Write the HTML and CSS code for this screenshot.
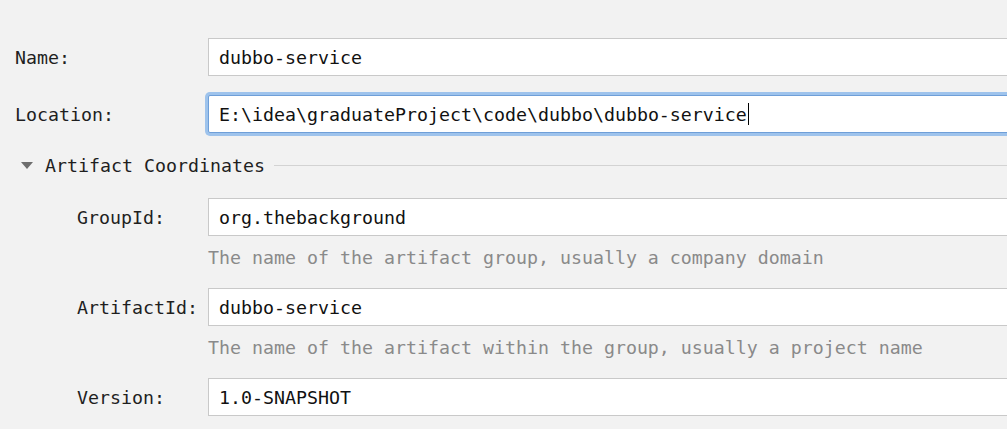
FILE: index.html
```html
<!DOCTYPE html>
<html>
<head>
<meta charset="utf-8">
<link rel="stylesheet" href="styles.css">
</head>
<body>
<div class="form">
  <div class="row">
    <div class="label">Name:</div>
    <div class="field">dubbo-service</div>
  </div>
  <div class="row row-loc">
    <div class="label">Location:</div>
    <div class="field focused">E:\idea\graduateProject\code\dubbo\dubbo-service<span class="caret"></span></div>
  </div>
  <div class="section">
    <span class="tri"></span>
    <span class="section-title">Artifact Coordinates</span>
    <span class="section-line"></span>
  </div>
  <div class="sub">
    <div class="row">
      <div class="label sublabel">GroupId:</div>
      <div class="field">org.thebackground</div>
    </div>
    <div class="hint">The name of the artifact group, usually a company domain</div>
    <div class="row">
      <div class="label sublabel">ArtifactId:</div>
      <div class="field">dubbo-service</div>
    </div>
    <div class="hint">The name of the artifact within the group, usually a project name</div>
    <div class="row">
      <div class="label sublabel">Version:</div>
      <div class="field">1.0-SNAPSHOT</div>
    </div>
  </div>
</div>
</body>
</html>
```
FILE: styles.css
```css
html, body {
  margin: 0;
  padding: 0;
  background: #f2f2f2;
  overflow: hidden;
}
body {
  width: 1007px;
  height: 429px;
  font-family: "DejaVu Sans Mono", "Liberation Mono", monospace;
  font-size: 18.27px;
  color: #1f1f1f;
}
.form {
  display: flex;
  flex-direction: column;
  padding: 38px 0 0 15px;
}
.row {
  display: flex;
  align-items: center;
  height: 38px;
  margin-right: -20px;
}
.row-loc {
  margin-top: 19px;
}
.label {
  width: 193px;
  flex: none;
  white-space: nowrap;
}
.sublabel {
  width: 131px;
}
.field {
  flex: 1;
  height: 38px;
  box-sizing: border-box;
  background: #ffffff;
  border: 1px solid #c9c9c9;
  padding-left: 10px;
  display: flex;
  align-items: center;
  white-space: nowrap;
  color: #111;
}
.focused {
  border-color: #6f9fd8;
  border-radius: 2px;
  box-shadow: 0 0 0 3px #9ec3ec;
}
.caret {
  display: inline-block;
  width: 1px;
  height: 22px;
  background: #000;
  margin-left: 1px;
}
.section {
  display: flex;
  align-items: center;
  height: 20px;
  margin-top: 22px;
  padding-left: 6px;
}
.tri {
  width: 0;
  height: 0;
  border-left: 6px solid transparent;
  border-right: 6px solid transparent;
  border-top: 7px solid #6e6e6e;
  margin-right: 12px;
  margin-top: 1px;
}
.section-title {
  white-space: nowrap;
}
.section-line {
  flex: 1;
  height: 1px;
  background: #d3d3d3;
  margin-left: 9px;
  margin-top: 1px;
}
.sub {
  display: flex;
  flex-direction: column;
  padding-left: 62px;
  margin-top: 23px;
}
.hint {
  margin: 12px 0 20px 131px;
  line-height: 20px;
  color: #8a8a8a;
  white-space: nowrap;
}
```
